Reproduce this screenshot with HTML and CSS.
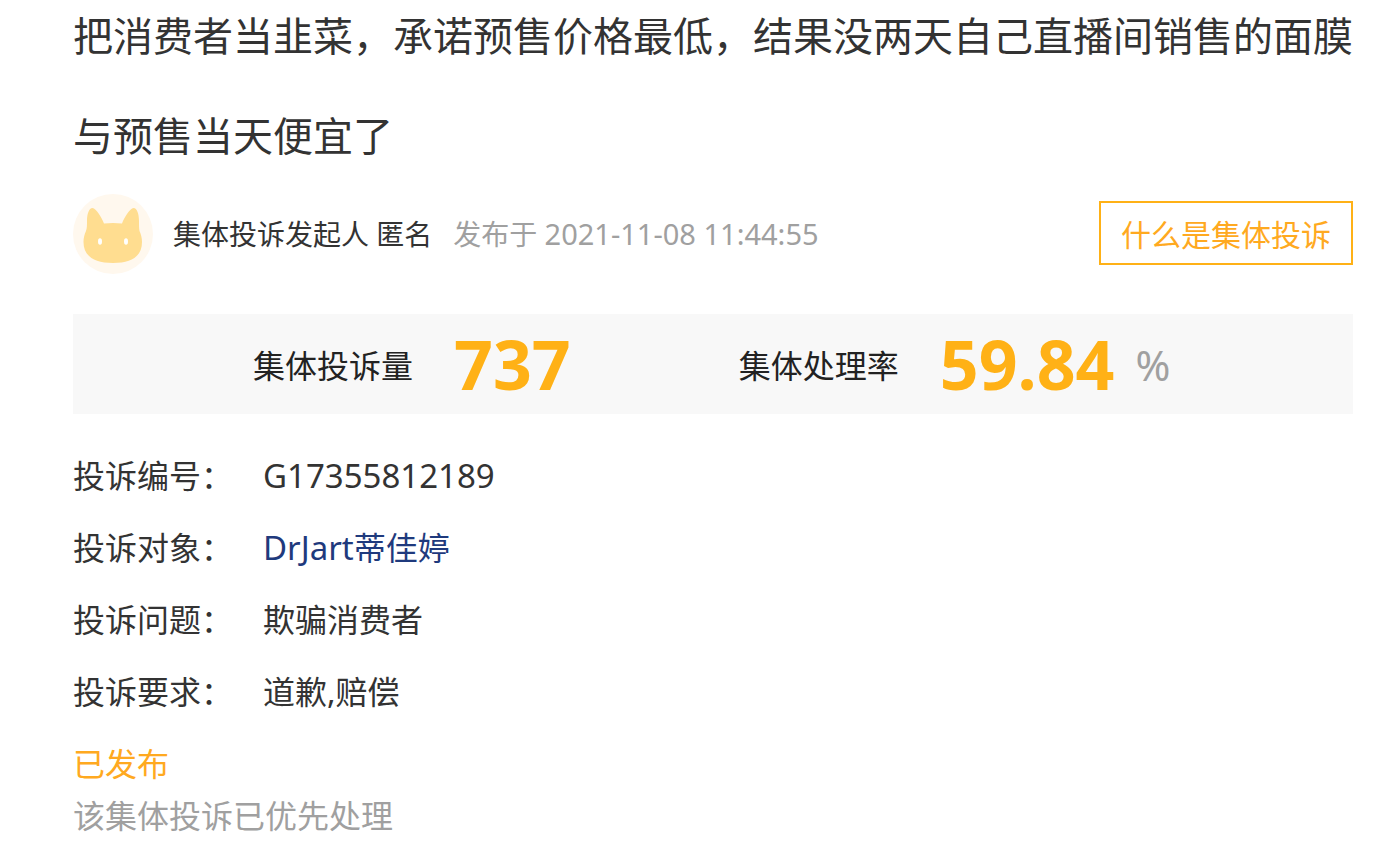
FILE: index.html
```html
<!DOCTYPE html>
<html lang="zh-CN">
  <head>
    <meta charset="UTF-8" />
    <meta name="viewport" content="width=device-width, initial-scale=1.0" />
    <title>集体投诉详情</title>
    <link rel="stylesheet" href="styles.css">
  </head>
  <body>
    <main class="complaint">
      <h1 class="complaint-title">把消费者当韭菜，承诺预售价格最低，结果没两天自己直播间销售的面膜与预售当天便宜了</h1>

      <div class="author">
        <svg class="author-avatar" viewBox="0 0 80 80" aria-hidden="true">
          <circle cx="40" cy="40" r="40" fill="#fff8ee" />
          <path d="M19.5 14 C16 14 14 20 14 27 C14 31 14 34 13 37 C11.5 40 10.5 44 10.5 48 C10.5 62 21 69 40 69 C59 69 69 62 69 48 C69 44 68 40 66.5 37 C66 34 66 31 66 27 C66 20 64 14 60.5 14 C57 14 51 24 49 29.5 Q40 28.5 31 29.5 C29 24 23 14 19.5 14 Z" fill="#ffdd90" />
          <ellipse cx="27" cy="47.5" rx="2" ry="3.2" fill="#fff" />
          <ellipse cx="53" cy="47.5" rx="2" ry="3.2" fill="#fff" />
        </svg>
        <span class="author-name">集体投诉发起人 匿名</span>
        <span class="author-date">发布于 <time datetime="2021-11-08T11:44:55">2021-11-08 11:44:55</time></span>
        <button type="button" class="help-button">什么是集体投诉</button>
      </div>

      <div class="stats">
        <div class="stat">
          <span class="stat-label">集体投诉量</span>
          <b class="stat-value">737</b>
        </div>
        <div class="stat">
          <span class="stat-label">集体处理率</span>
          <b class="stat-value">59.84</b>
          <span class="stat-unit">%</span>
        </div>
      </div>

      <dl class="details">
        <dt>投诉编号：</dt>
        <dd><span class="latin">G17355812189</span></dd>
        <dt>投诉对象：</dt>
        <dd><a href="#"><span class="latin">DrJart</span>蒂佳婷</a></dd>
        <dt>投诉问题：</dt>
        <dd>欺骗消费者</dd>
        <dt>投诉要求：</dt>
        <dd>道歉,赔偿</dd>
      </dl>

      <p class="status">已发布</p>
      <p class="status-note">该集体投诉已优先处理</p>
    </main>
  </body>
</html>
```
FILE: styles.css
```css
body {
  margin: 0;
  background: #fff;
  color: #333;
  font-family: "Noto Sans", "Noto Sans CJK SC", sans-serif;
  font-size: 32px;
  font-weight: 400;
}

.complaint {
  padding: 0 37px 0 73px;
}

.complaint-title {
  margin: -14px 0 8px;
  font-size: 40px;
  font-weight: 400;
  line-height: 100px;
}

/* Author row */
.author {
  display: flex;
  align-items: center;
  font-size: 28px;
  line-height: 40px;
}

.author-avatar {
  width: 80px;
  height: 80px;
  margin-right: 20px;
}

.author-date {
  margin-left: 21px;
  color: #a0a0a0;
}

.author-date time {
  font-size: 29px;
}

.help-button {
  margin: 0 0 2px auto;
  height: 64px;
  padding: 0 20px;
  border: 2px solid #ffb116;
  background: #fff;
  color: #ffa920;
  font-family: inherit;
  font-size: 30px;
  cursor: pointer;
}

/* Totals */
.stats {
  display: flex;
  gap: 168px;
  height: 100px;
  margin-top: 40px;
  padding-left: 180px;
  background: #f8f8f8;
  color: #222;
}

.stat {
  display: flex;
  align-items: center;
}

.stat-value {
  margin-left: 41px;
  color: #ffb116;
  font-size: 68px;
  line-height: 100px;
}

.stat-unit {
  margin-left: 21px;
  color: #a0a0a0;
  font-size: 42px;
}

/* Complaint details */
.details {
  display: grid;
  grid-template-columns: 190px 1fr;
  margin: 26px 0 0;
  line-height: 72px;
}

.details dd {
  margin: 0;
}

.details .latin {
  font-size: 33px;
  line-height: 1;
}

.details a {
  color: #1f3a7d;
  text-decoration: none;
}

.status,
.status-note {
  margin: 0;
  line-height: 52px;
}

.status {
  margin-top: 10px;
  color: #ffa920;
}

.status-note {
  color: #a0a0a0;
}
```
